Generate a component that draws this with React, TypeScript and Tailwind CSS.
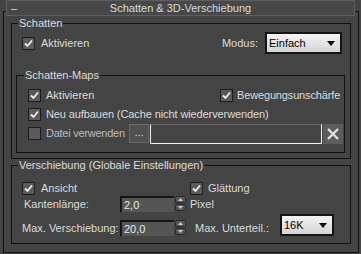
import React from "react";

const Check = ({ on = true }: { on?: boolean }) => (
  <span className="w-[13px] h-[13px] shrink-0 border border-[#1c1c1c] bg-[#5a5a5a] flex items-center justify-center">
    {on && (
      <svg width="9" height="9" viewBox="0 0 9 9">
        <path d="M1 4.5 L3.5 7 L8 1.5" stroke="#f0f0f0" strokeWidth="1.8" fill="none" />
      </svg>
    )}
  </span>
);

const Drop = ({ label, w }: { label: string; w: string }) => (
  <div className={`${w} h-[22px] border-2 border-[#141414] bg-gradient-to-b from-[#f4f4f4] to-[#d4d4d4] flex items-center justify-between pl-[2px] pr-[5px] text-black`}>
    <span>{label}</span>
    <svg width="8" height="5" viewBox="0 0 8 5">
      <path d="M0 0 H8 L4 5 Z" fill="#000" />
    </svg>
  </div>
);

const Spin = ({ value }: { value: string }) => (
  <div className="flex items-center h-[16px]">
    <div className="w-[54px] h-[16px] border-t-2 border-l-2 border-[#151515] bg-[#555555] flex items-center pl-[2px] text-[#e8e8e8]">
      {value}
    </div>
    <div className="w-[11px] h-[16px] ml-[1px] flex flex-col gap-[1px]">
      <div className="h-[7px] bg-[#585858] border border-[#2a2a2a] rounded-[2px] flex items-center justify-center">
        <svg width="5" height="3" viewBox="0 0 5 3"><path d="M0 3 L2.5 0 L5 3 Z" fill="#cfcfcf" /></svg>
      </div>
      <div className="h-[7px] bg-[#585858] border border-[#2a2a2a] rounded-[2px] flex items-center justify-center">
        <svg width="5" height="3" viewBox="0 0 5 3"><path d="M0 0 L5 0 L2.5 3 Z" fill="#cfcfcf" /></svg>
      </div>
    </div>
  </div>
);

export default function App() {
  return (
    <div
      className="w-[361px] h-[254px] bg-[#444444] text-[#dcdcdc] text-[11px] leading-[13px] overflow-hidden"
      style={{ fontFamily: '"Liberation Sans", Arial, sans-serif' }}
    >
      <div className="relative z-10 ml-[6px] w-[349px] h-[16px] border border-[#5e5e5e] bg-[#474747] flex items-center">
        <span className="absolute left-[4px] top-[1px]">–</span>
        <span className="flex-1 text-center">Schatten &amp; 3D-Verschiebung</span>
      </div>
      <div className="-mt-[5px] ml-[3px] w-[356px] h-[242px] border border-[#111111] pt-[11px]">
        {/* Schatten */}
        <div className="relative ml-[7px] w-[340px] h-[136px] border border-[#111111]">
          <span className="absolute left-[6px] -top-[7px] px-[1px] bg-[#444444]">Schatten</span>
          <div className="mt-[8px] h-[22px] flex items-center pl-[10px] pr-[8px]">
            <Check />
            <span className="ml-[6px]">Aktivieren</span>
            <span className="ml-auto mr-[7px]">Modus:</span>
            <Drop label="Einfach" w="w-[77px]" />
          </div>
          {/* Schatten-Maps */}
          <div className="relative mt-[21px] ml-[4px] w-[329px] h-[78px] border border-[#111111]">
            <span className="absolute left-[7px] -top-[7px] px-[1px] bg-[#444444]">Schatten-Maps</span>
            <div className="mt-[10px] pl-[11px] flex flex-col">
              <div className="h-[19px] flex items-center">
                <Check />
                <span className="ml-[5px] w-[174px]">Aktivieren</span>
                <Check />
                <span className="ml-[4px] whitespace-nowrap tracking-[-0.15px]">Bewegungsunschärfe</span>
              </div>
              <div className="h-[19px] flex items-center">
                <Check />
                <span className="ml-[5px] tracking-[-0.1px]">Neu aufbauen (Cache nicht wiederverwenden)</span>
              </div>
              <div className="h-[19px] flex items-center">
                <Check on={false} />
                <span className="ml-[5px] w-[83px] whitespace-nowrap tracking-[-0.25px] text-[#bcbcbc]">Datei verwenden</span>
                <div className="w-[20px] h-[19px] bg-[#505050] border border-[#6a6a6a] flex items-center justify-center pb-[3px]">...</div>
                <div className="ml-[1px] w-[172px] h-[20px] border border-[#f0f0f0] border-t-[#6a6a6a]" />
                <div className="ml-[1px] w-[20px] h-[20px] bg-[#5c5c5c] flex items-center justify-center">
                  <svg width="12" height="12" viewBox="0 0 12 12">
                    <path d="M1 1 L11 11 M11 1 L1 11" stroke="#e0e0e0" strokeWidth="2.4" />
                  </svg>
                </div>
              </div>
            </div>
          </div>
        </div>
        {/* Verschiebung */}
        <div className="relative mt-[6px] ml-[7px] w-[340px] h-[79px] border border-[#111111]">
          <span className="absolute left-[6px] -top-[7px] px-[1px] bg-[#444444]">Verschiebung (Globale Einstellungen)</span>
          <div className="mt-[16px] pl-[10px] h-[13px] flex items-center">
            <Check />
            <span className="ml-[6px] w-[149px]">Ansicht</span>
            <Check />
            <span className="ml-[5px]">Glättung</span>
          </div>
          <div className="mt-[1px] pl-[12px] h-[16px] flex items-center">
            <span className="w-[96px]">Kantenlänge:</span>
            <Spin value="2,0" />
            <span className="ml-[4px]">Pixel</span>
          </div>
          <div className="mt-[2px] pl-[10px] h-[22px] flex items-end">
            <span className="w-[98px] h-[16px] flex items-center">Max. Verschiebung:</span>
            <Spin value="20,0" />
            <span className="ml-[9px] w-[85px] h-[16px] flex items-center">Max. Unterteil.:</span>
            <Drop label="16K" w="w-[54px]" />
          </div>
        </div>
      </div>
    </div>
  );
}
